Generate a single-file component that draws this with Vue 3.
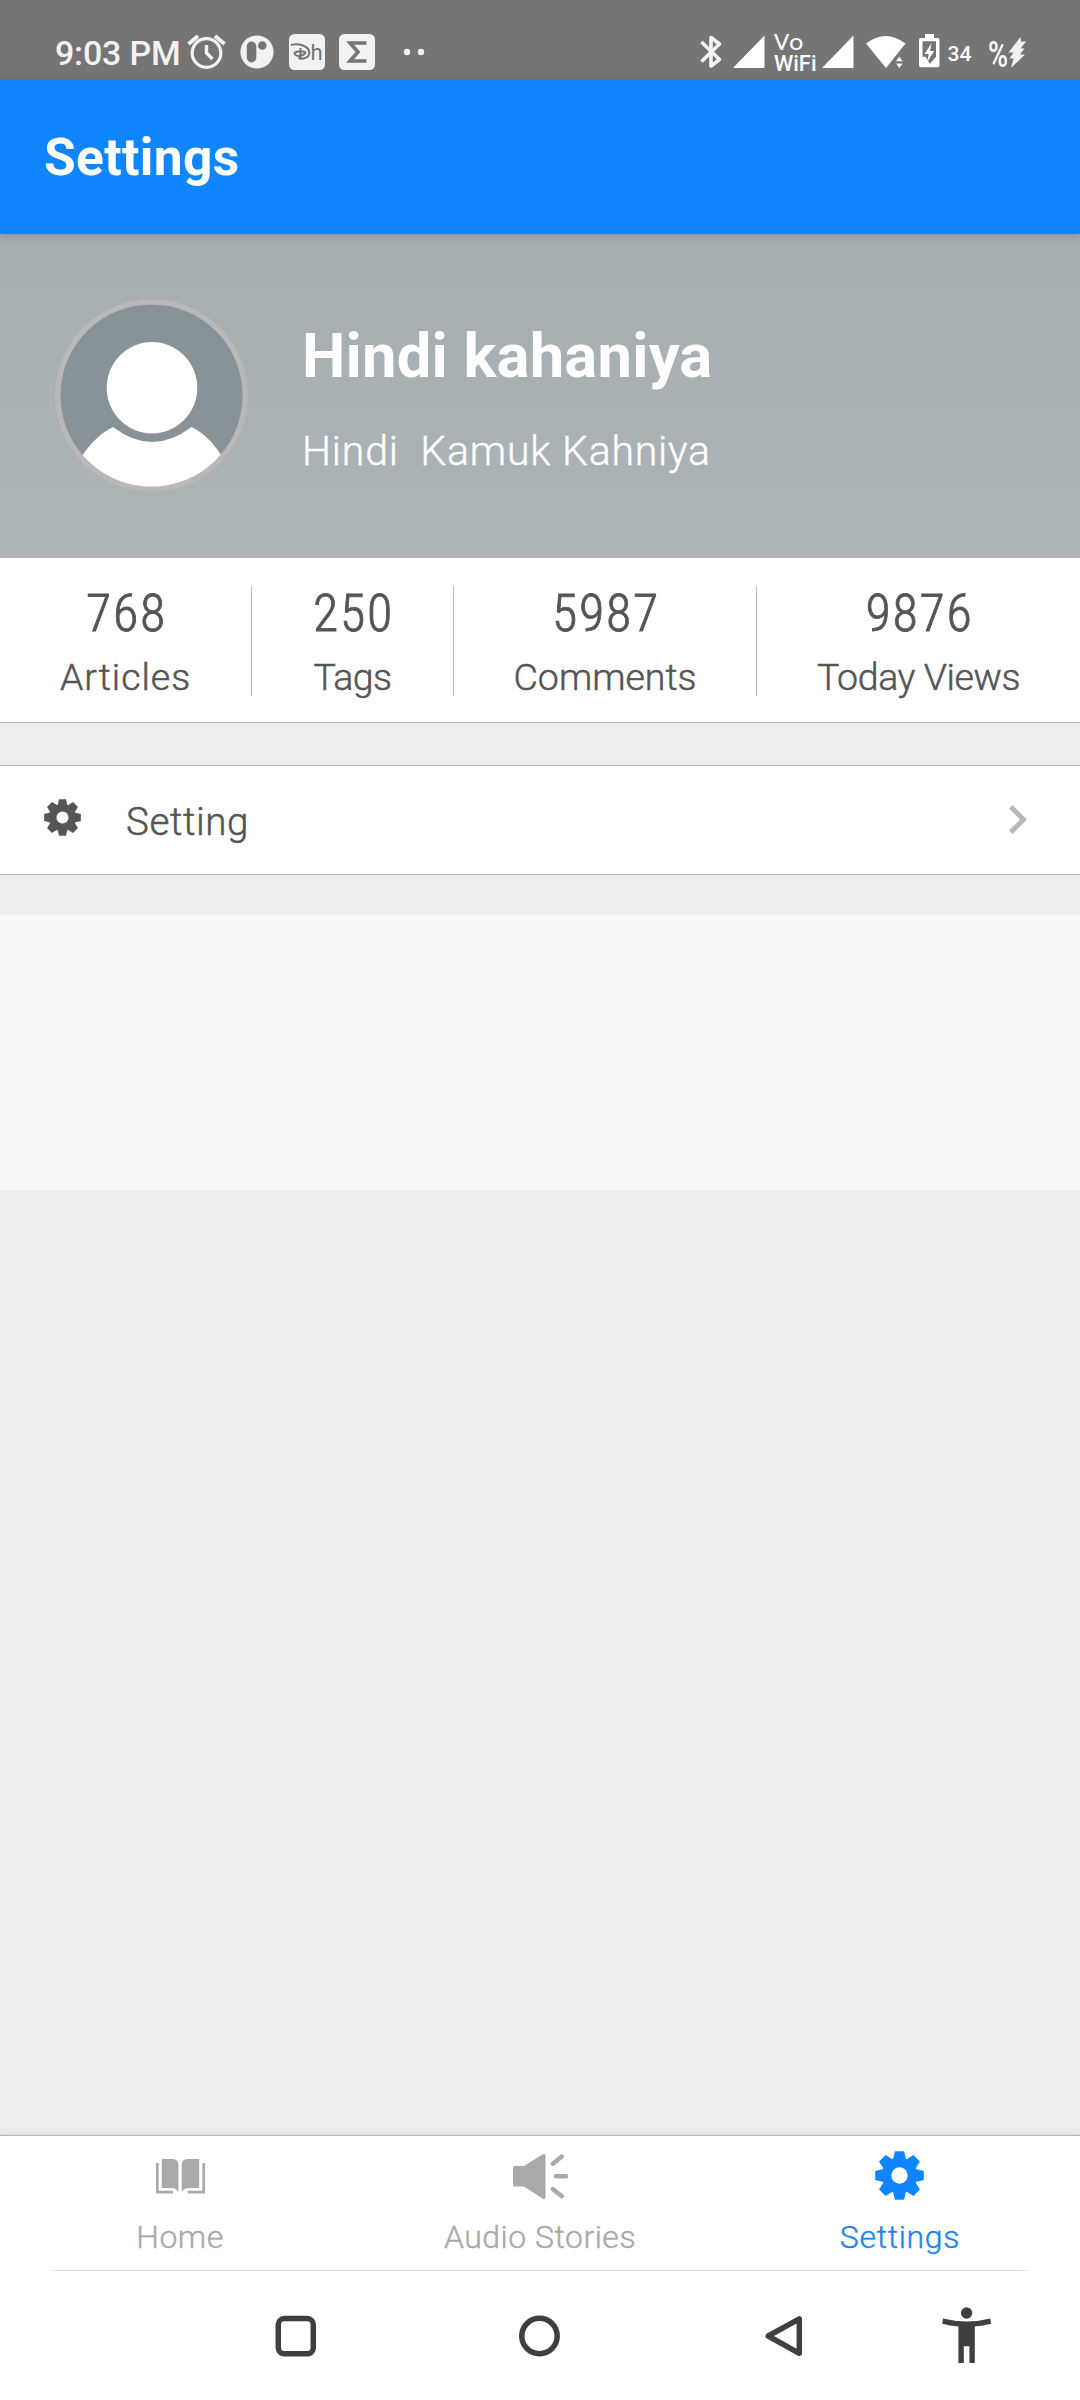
<script setup>
const stats = [
  { value: '768', label: 'Articles', width: 252, spacing: 0.95 },
  { value: '250', label: 'Tags', width: 202, spacing: -0.6 },
  { value: '5987', label: 'Comments', width: 303, spacing: 0 },
  { value: '9876', label: 'Today Views', width: 323, spacing: -0.4 },
]
const teeth = [0, 45, 90, 135, 180, 225, 270, 315]
</script>

<template>
  <div class="screen">
    <div class="status">
      <span class="time">9:03 PM</span>
      <svg class="left-icons" width="244" height="80" viewBox="182 0 244 80">
        <g fill="none" stroke="#f2f2f2">
          <circle cx="206.5" cy="53" r="14.3" stroke-width="3.2" />
          <path d="M206.5 45v8l6 6" stroke-width="3.4" />
          <path d="M188.500 44l9.500-8M224.500 44l-9.500-8" stroke-width="3.8" />
        </g>
        <circle cx="257" cy="52" r="16.600" fill="#f2f2f2" />
        <rect x="246.800" y="41.500" width="9.500" height="21" rx="4.700" fill="#757575" />
        <circle cx="262.300" cy="45.500" r="4.300" fill="#757575" />
        <rect x="289" y="34" width="36" height="36" rx="5.500" fill="#f2f2f2" />
        <path d="M291 45c7-1.800 18.500.5 18.300 8-.1 5.500-8 6.500-11 4.800M300.500 48v11.500M295.500 55c-3-2 1-3.700 5-3.700 4 0 5.500 1 4.500 2.200-1.500 1.800-7 3.500-9.500 1.500" fill="none" stroke="#757575" stroke-width="2" />
        <text x="310.500" y="60" font-size="22" fill="#757575" class="roboto">h</text>
        <rect x="339" y="34" width="36" height="36" rx="5.500" fill="#f2f2f2" />
        <path d="M366.500 43H350l8 9-8 9h16.500" fill="none" stroke="#757575" stroke-width="3.600" />
        <circle cx="407" cy="52" r="3.200" fill="#f2f2f2" />
        <circle cx="421" cy="52" r="3.200" fill="#f2f2f2" />
      </svg>
      <svg class="right-icons" width="332" height="80" viewBox="698 0 332 80" fill="#fff">
        <path d="M701.500 42l18 17.500-8.500 6.500V37.500l8.500 6.500-18 17.500" fill="none" stroke="#f4f4f4" stroke-width="3.600" stroke-linejoin="round" />
        <path d="M734 67.500l30-31v31z" stroke="#fff" stroke-linejoin="round" stroke-width="1" />
        <text x="773.500" y="49.500" font-size="22" textLength="30" lengthAdjust="spacingAndGlyphs" class="roboto">Vo</text>
        <text x="774" y="71" font-size="21.500" font-weight="500" textLength="42.500" lengthAdjust="spacingAndGlyphs" class="roboto">WiFi</text>
        <path d="M823 67.500l30-31v31z" stroke="#fff" stroke-linejoin="round" stroke-width="1" />
        <path d="M866 43.500q19.500-15 39.500 0L886 68z" />
        <path d="M895.500 61.500l3.800-5.300 3.800 5.300zM895.500 63.200h7.600l-3.800 5.300z" stroke="#757575" stroke-width=".6" />
        <path fill-rule="evenodd" d="M925 34h9v4h3.500q2 0 2 2v25.500q0 1.800-2 1.800h-16.500q-2 0-2-1.800V40q0-2 2-2h4zM922.500 41.200v15.500h3l4.500 7 6-7V41.200z" />
        <path d="M931.500 43l-7 11h4.200l-1.500 8 7-11h-4.200z" />
        <text x="947.500" y="60.500" font-size="21" font-weight="500" class="roboto">34</text>
        <text x="988" y="67" font-size="36" textLength="20" lengthAdjust="spacingAndGlyphs" font-weight="500" class="roboto">%</text>
        <path d="M1020.500 37l-12 15.500h5l-4 6h4l-2.500 9.500 14-13.500h-5l4.500-6h-4l5.500-7h-5z" fill="#f2f2f2" />
      </svg>
    </div>

    <header class="appbar">Settings</header>

    <section class="profile">
      <svg class="avatar" width="193" height="193" viewBox="0 0 193 193">
        <defs>
          <clipPath id="disc"><circle cx="96.500" cy="96.500" r="92" /></clipPath>
        </defs>
        <circle cx="96.500" cy="96.500" r="92" fill="#879398" />
        <g clip-path="url(#disc)" fill="#fff">
          <ellipse cx="97" cy="88.700" rx="45.300" ry="45.700" />
          <path d="M58 128q39 30 78.500 0q20 10 33 34L150 193H45L24 162Q38 138 58 128z" />
        </g>
        <circle cx="96.500" cy="96.500" r="93.700" fill="none" stroke="#b8b8b9" stroke-width="5.300" />
      </svg>
      <div class="identity">
        <h1>Hindi kahaniya</h1>
        <p>Hindi&nbsp; Kamuk Kahniya</p>
      </div>
    </section>

    <section class="stats">
      <div v-for="s in stats" :key="s.label" class="stat" :style="{ width: s.width + 'px' }">
        <span class="value">{{ s.value }}</span>
        <span class="label" :style="{ letterSpacing: s.spacing + 'px' }">{{ s.label }}</span>
      </div>
    </section>

    <div class="row">
      <svg class="row-gear" width="37" height="37" viewBox="-24.500 -24.500 49 49">
        <circle r="13" fill="none" stroke="#555" stroke-width="10" />
        <path v-for="a in teeth" :key="a" :transform="`rotate(${a})`" d="M-4.600-24.300h9.200l1.900 8.300h-13z" fill="#555" />
      </svg>
      <span class="row-label">Setting</span>
      <svg class="chevron" width="18" height="29" viewBox="0 0 18 29">
        <path d="M1.800 1.800L14.500 14.500 1.800 27.200" fill="none" stroke="#b8b8b8" stroke-width="4.800" />
      </svg>
    </div>

    <div class="panel"></div>

    <nav class="tabs">
      <div class="tab">
        <svg width="49" height="35" viewBox="0 0 49 35" fill="#a9a9a9">
          <path d="M5.800 0H17q5.500.5 5.500 6v27q-2-4-8-4H5.800zM43.200 0H31.500q-5.800.5-5.800 6v27q2-4 8-4h9.500z" />
          <path d="M0 4h2.600v27.700H17v2.900H0zM49 4h-2.600v27.700H31.700v2.900H49z" />
        </svg>
        <span class="home">Home</span>
      </div>
      <div class="tab">
        <svg width="55" height="45" viewBox="0 0 55 45" fill="#a9a9a9">
          <path d="M1.500 12H11L29.500.5q3-1.500 3 1.500v41q0 3-3 1.500L11 32.500H1.500q-1.500 0-1.500-1.500V13.500Q0 12 1.500 12z" />
          <path d="M39.800 9.700l9-7.200M43 22.300h10M39.800 35l9 7.200" stroke="#a9a9a9" stroke-width="4.400" stroke-linecap="round" />
        </svg>
        <span class="audio">Audio Stories</span>
      </div>
      <div class="tab active">
        <svg width="49" height="49" viewBox="-24.500 -24.500 49 49">
          <circle r="13" fill="none" stroke="#0f85ff" stroke-width="9.600" />
          <path v-for="a in teeth" :key="a" :transform="`rotate(${a})`" d="M-4.600-24.300h9.200l1.900 8.300h-13z" fill="#0f85ff" />
        </svg>
        <span>Settings</span>
      </div>
    </nav>

    <div class="sysnav">
      <svg class="recent" width="42" height="42" viewBox="0 0 42 42"><rect x="3.300" y="3.600" width="35" height="35.200" rx="6" /></svg>
      <svg class="circle" width="42" height="42" viewBox="0 0 42 42"><circle cx="20.500" cy="21" r="17.700" /></svg>
      <svg class="back" width="42" height="42" viewBox="0 0 42 42"><path d="M36.300 3.800v34.500L5.200 21z" stroke-linejoin="round" /></svg>
      <svg class="person" width="50" height="57" viewBox="0 0 50 57">
        <circle cx="24.600" cy="6" r="5.700" />
        <path d="M1 11.500q24 6 47.300 0l.8 5.200q-8 2.300-16.300 2.800V56h-5.400V39.200h-5.600V56h-5.400V19.500Q8 19 .2 16.700z" />
      </svg>
    </div>
  </div>
</template>

<style>
body { background: #ededed; }
</style>

<style scoped>
.screen { width: 1080px; height: 2400px; background: #ededed; display: flex; flex-direction: column; font-family: Roboto, sans-serif; overflow: hidden; }
.screen svg { flex: none; display: block; }
.roboto { font-family: Roboto, sans-serif; }
.status { height: 80px; flex: none; background: #757575; display: flex; align-items: flex-start; }
.time { width: 127px; margin-left: 55px; line-height: 107px; height: 80px; font-size: 34px; font-weight: 500; letter-spacing: -.2px; color: #f2f2f2; white-space: nowrap; }
.right-icons { margin-left: 272px; }
.appbar { height: 154px; flex: none; box-sizing: border-box; padding-left: 44px; line-height: 155px; background: #0f86ff; color: #fff; font-size: 51.5px; font-weight: 700; letter-spacing: .35px; box-shadow: 0 1px 7px rgba(110, 80, 80, .45); position: relative; }
.profile { height: 324px; flex: none; box-sizing: border-box; border-bottom: 1px solid #b1b1b1; background: linear-gradient(#a5adb0, #acb4b7); display: flex; color: #fff; }
.avatar { margin: 65px 0 0 55px; }
.identity { margin: 82px 0 0 54px; }
h1 { margin: 0; line-height: 80px; font-size: 61.5px; font-weight: 700; letter-spacing: .2px; white-space: nowrap; }
p { margin: 25px 0 0; line-height: 60px; font-size: 41px; font-weight: 300; letter-spacing: .8px; white-space: nowrap; -webkit-text-stroke: .4px currentColor; }
.stats { height: 165px; flex: none; box-sizing: border-box; padding-top: 28px; border-bottom: 1px solid #b8b8b8; background: #fff; display: flex; align-items: flex-start; color: #555; }
.stat { height: 110px; flex: none; box-sizing: border-box; display: flex; flex-direction: column; align-items: center; border-right: 1px solid #bdbdbd; }
.stat:last-child { border: 0; }
.value { line-height: 60px; margin: -2px 0 0 2px; font-size: 52px; font-weight: 300; font-stretch: 75%; letter-spacing: 1.7px; -webkit-text-stroke: .8px currentColor; }
.label { line-height: 50px; margin-top: 8px; font-size: 37.5px; font-weight: 300; white-space: nowrap; -webkit-text-stroke: .5px currentColor; }
.row { height: 110px; flex: none; box-sizing: border-box; margin-top: 42px; border-top: 1px solid #b8b8b8; border-bottom: 1px solid #b8b8b8; background: #fff; display: flex; align-items: flex-start; color: #555; }
.row-gear { margin: 33px 0 0 44px; }
.row-label { margin: 31px 0 0 45px; line-height: 50px; font-size: 38.5px; font-weight: 300; letter-spacing: .6px; -webkit-text-stroke: .5px currentColor; }
.chevron { margin: 39px 53px 0 auto; }
.panel { height: 275px; flex: none; margin-top: 40px; background: #f7f7f7; }
.tabs { height: 135px; flex: none; box-sizing: border-box; width: 1080px; margin-top: auto; border-top: 1px solid #b4b4b4; box-shadow: 0 0 6px rgba(0, 0, 0, .13); background: #fff; display: flex; color: #a9a9a9; }
.tab { width: 360px; display: flex; flex-direction: column; align-items: center; font-size: 32px; font-weight: 300; letter-spacing: .5px; -webkit-text-stroke: .4px currentColor; }
.tab svg { margin-top: 23px; }
.tab:nth-child(2) svg { margin-top: 18px; }
.tab.active svg { margin-top: 15px; }
.tab.active { margin-left: -1px; }
.tab span { line-height: 50px; margin-top: 18px; }
.tab .audio { margin-top: 13px; }
.tab.active span { margin: 12px 0 0 2px; color: #1f84ea; letter-spacing: .7px; }
.sysnav { height: 130px; flex: none; background: linear-gradient(90deg, transparent 48px, #dedede 58px, #dedede 1020px, transparent 1032px) 0 0 / 100% 1px no-repeat #fff; z-index: 1; display: flex; align-items: flex-start; fill: none; stroke: #3f3f3f; stroke-width: 5.500; }
.recent { margin: 45px 0 0 275px; }
.circle { margin: 45px 0 0 202px; }
.back { margin: 45px 0 0 202px; }
.person { margin: 37px 0 0 137px; fill: #3f3f3f; stroke: none; }
</style>
